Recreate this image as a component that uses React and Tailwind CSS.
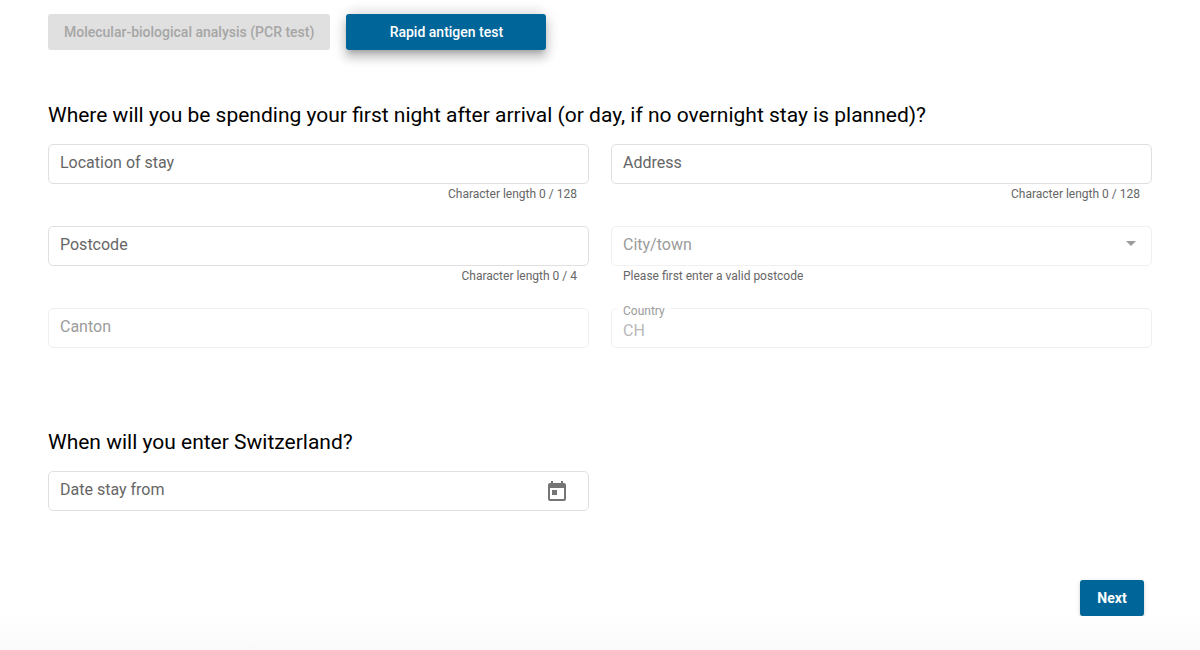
import React, { useState } from 'react';
import { MdArrowDropDown, MdToday } from 'react-icons/md';

const TEST_TYPES = [
  { id: 'pcr', label: 'Molecular-biological analysis (PCR test)', disabled: true },
  { id: 'antigen', label: 'Rapid antigen test', disabled: false },
];

// Outlined box shared by all fields
const BOX = 'block w-full h-10 px-[11px] pt-1 rounded-[5px] border border-[#e0e0e0] bg-transparent text-base text-black/85 outline-none focus:border-[#006699] disabled:border-[#f0f0f0] disabled:text-[#b8b8b8] disabled:opacity-100';

// Label sits inside the box while it is empty and on the border once it is filled
const FieldLabel = ({ id, floating, disabled, children }) => (
  <label
    htmlFor={id}
    className={`pointer-events-none absolute ${floating ? '-top-[7px] left-1.5 bg-white px-1.5 text-xs leading-5' : 'top-[9px] left-3 text-base leading-5'} ${disabled ? 'text-[#9b9b9b]' : 'text-[#666666]'}`}
  >
    {children}
  </label>
);

const TextField = ({ id, label, value = '', onChange, maxLength, disabled, icon }) => (
  <div>
    <div className="relative">
      <input
        id={id}
        type="text"
        className={BOX}
        value={value}
        maxLength={maxLength}
        disabled={disabled}
        onChange={(e) => onChange(id, e.target.value)}
      />
      <FieldLabel id={id} floating={value !== ''} disabled={disabled}>{label}</FieldLabel>
      {icon}
    </div>
    <div className="h-5 px-3 text-right text-xs leading-5 text-[#666666]">
      {maxLength && `Character length ${value.length} / ${maxLength}`}
    </div>
  </div>
);

const SectionTitle = ({ children }) => (
  <h2 className="mb-[15px] text-[21px] leading-7 text-black">{children}</h2>
);

function App() {
  const [testType, setTestType] = useState('antigen');
  const [form, setForm] = useState({ location: '', address: '', postcode: '', date: '' });

  const handleChange = (id, value) => setForm((prev) => ({ ...prev, [id]: value }));

  return (
    <div className="flex min-h-screen flex-col bg-white font-['Roboto',sans-serif]">
      <form className="px-12 pt-3.5" onSubmit={(e) => e.preventDefault()}>
        <div className="flex gap-4">
          {TEST_TYPES.map((type) => (
            <button
              key={type.id}
              type="button"
              disabled={type.disabled}
              onClick={() => setTestType(type.id)}
              className={`h-9 min-w-[200px] rounded-[3px] px-4 text-sm font-medium ${
                testType === type.id
                  ? 'bg-[#006699] text-white shadow-[0_5px_5px_-3px_rgba(0,0,0,0.2),0_8px_10px_1px_rgba(0,0,0,0.14),0_3px_14px_2px_rgba(0,0,0,0.12),0_-10px_10px_-4px_rgba(0,0,0,0.05)]'
                  : 'bg-[#e0e0e0] text-[#a6a6a6]'
              }`}
            >
              {type.label}
            </button>
          ))}
        </div>

        <section className="mt-[51px]">
          <SectionTitle>Where will you be spending your first night after arrival (or day, if no overnight stay is planned)?</SectionTitle>
          <div className="grid grid-cols-2 gap-[22px]">
            <TextField id="location" label="Location of stay" value={form.location} onChange={handleChange} maxLength={128} />
            <TextField id="address" label="Address" value={form.address} onChange={handleChange} maxLength={128} />
            <TextField id="postcode" label="Postcode" value={form.postcode} onChange={handleChange} maxLength={4} />
            <div>
              <div className="relative">
                <select id="city" disabled className={`${BOX} appearance-none`} defaultValue="">
                  <option value="" />
                </select>
                <FieldLabel id="city" disabled>City/town</FieldLabel>
                <MdArrowDropDown className="pointer-events-none absolute top-[5px] right-[9px] size-6 text-[#9b9b9b]" />
              </div>
              <p className="px-3 text-xs leading-5 text-[#666666]">Please first enter a valid postcode</p>
            </div>
            <TextField id="canton" label="Canton" disabled />
            <TextField id="country" label="Country" value="CH" disabled />
          </div>
        </section>

        <section className="mt-[60px]">
          <SectionTitle>When will you enter Switzerland?</SectionTitle>
          <div className="grid grid-cols-2 gap-[22px]">
            <TextField
              id="date"
              label="Date stay from"
              value={form.date}
              onChange={handleChange}
              icon={
                <button type="button" aria-label="Open calendar" className="absolute top-[9px] right-5 text-[#757575]">
                  <MdToday className="size-6" />
                </button>
              }
            />
          </div>
        </section>

        <div className="mt-[49px] flex justify-end pr-2">
          <button
            type="submit"
            className="h-9 min-w-16 rounded-[3px] bg-[#006699] px-4 text-sm font-bold text-white shadow-[0_3px_1px_-2px_rgba(0,0,0,0.2),0_2px_2px_0_rgba(0,0,0,0.14),0_1px_5px_0_rgba(0,0,0,0.12)]"
          >
            Next
          </button>
        </div>
      </form>
      <div className="grow bg-linear-to-b from-white to-[#fafafa]" />
    </div>
  );
}

export default App;
